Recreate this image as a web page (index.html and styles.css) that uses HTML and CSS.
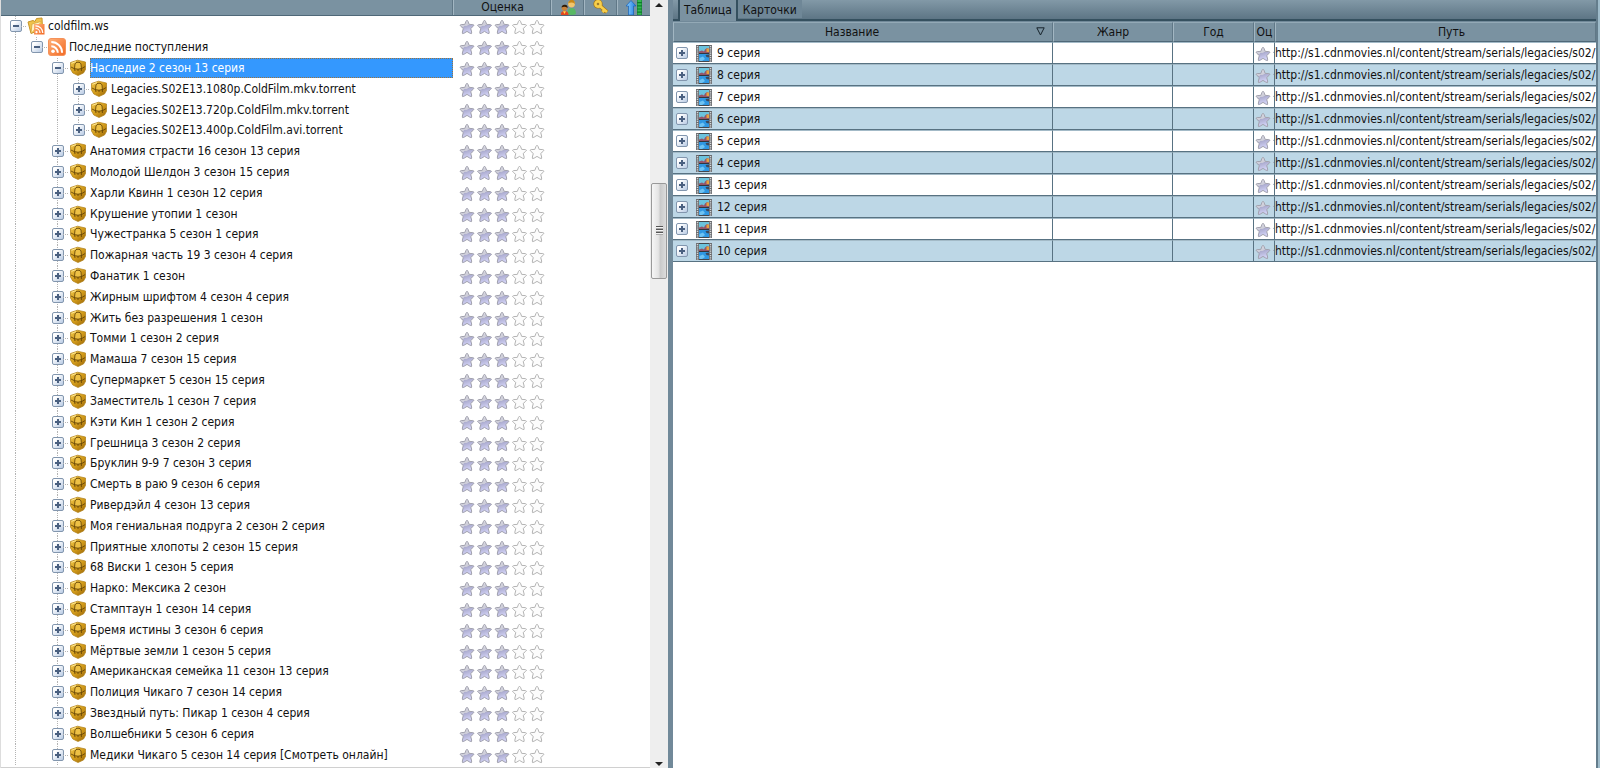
FILE: index.html
```html
<!DOCTYPE html>
<html lang="ru">
<head>
<meta charset="utf-8">
<title>coldfilm.ws</title>
<meta name="viewport" content="width=device-width, initial-scale=1">
<link rel="stylesheet" href="styles.css">
</head>
<body>
<svg class="sprite" aria-hidden="true">
  <defs>
    <linearGradient id="g-star" x1="0" y1="0" x2="0.3" y2="1"><stop offset="0" stop-color="#e2e2e8"/><stop offset="0.5" stop-color="#cbcbd8"/><stop offset="0.52" stop-color="#acaccf"/><stop offset="1" stop-color="#d2d2f6"/></linearGradient>
    <linearGradient id="g-rss" x1="0" y1="0" x2="1" y2="1"><stop offset="0" stop-color="#ffb27a"/><stop offset="1" stop-color="#f26a24"/></linearGradient>
    <linearGradient id="g-gold" x1="0" y1="0" x2="1" y2="1"><stop offset="0" stop-color="#f0c84c"/><stop offset="0.5" stop-color="#d39c1a"/><stop offset="1" stop-color="#996508"/></linearGradient>
    <linearGradient id="g-up" x1="0" y1="0" x2="1" y2="0"><stop offset="0" stop-color="#8fd0ff"/><stop offset="1" stop-color="#1e7fe0"/></linearGradient>
    <symbol id="star" viewBox="0 0 16 16"><path d="M8 1.200Q8.800 1.200 10.200 5.400 15 5.300 15 6.300 14.500 7.200 11.700 9.500 13.200 14 12.500 14.600 11.500 14.800 8 12.400 4.500 14.800 3.500 14.600 2.800 14 4.300 9.500 1.500 7.200 1 6.300 1 5.300 5.800 5.400 7.200 1.200 8 1.200Z" stroke-linejoin="round"/></symbol>
    <symbol id="stars" viewBox="0 0 87 16">
      <g fill="url(#g-star)" stroke="#a2a2ae"><use href="#star" width="16" height="16"/><use href="#star" x="17.500" width="16" height="16"/><use href="#star" x="35" width="16" height="16"/></g>
      <g fill="#fcfcfc" stroke="#b4b4b4"><use href="#star" x="52.500" width="16" height="16"/><use href="#star" x="70" width="16" height="16"/></g>
    </symbol>
    <symbol id="box" viewBox="0 0 18 18">
      <path d="M1.500 3.500 8.500 1.200 16.500 3 16.500 10.500 14.500 14 9 16.500 3.800 14 1.500 10Z" fill="url(#g-gold)" stroke="#ad7c14" stroke-width=".7"/>
      <path d="M6 4.500 9 3.200 12 4.500 12.500 9 9 10.200 5.500 9Z" fill="#eec145"/>
      <path d="M2 8Q5 10.200 9 10.200T16.200 7.500M6 5Q6.500 3.200 9 3.200T12 5L12.400 9.500V12M6 5 5.500 9.500 6 12M9 10.200V12" fill="none" stroke="#5c3d05" stroke-width=".8"/>
      <path d="M2.500 4.300 7 2.600" stroke="#ffe995"/>
    </symbol>
    <symbol id="rss" viewBox="0 0 18 18">
      <rect x=".5" y=".5" width="17" height="17" rx="2.500" fill="url(#g-rss)" stroke="#f5925a"/>
      <circle cx="5" cy="13.300" r="1.800" fill="#fff"/>
      <path d="M3.300 8.300a6.500 6.500 0 0 1 6.500 6.500M3.300 4a10.800 10.800 0 0 1 10.800 10.800" fill="none" stroke="#fff" stroke-width="2"/>
    </symbol>
    <symbol id="feeds" viewBox="0 0 18 18">
      <path d="M1 5 6 3.500 8 4.500 9.500 1.500 15 1 15.500 12 4 16.500Z" fill="#f0c24a" stroke="#c8962a"/>
      <path d="M4 16 5 7 14 4.500" fill="#fff3c4" stroke="#d5a63c" stroke-width=".8"/>
      <rect x="7" y="7" width="10.500" height="10.500" fill="url(#g-rss)"/>
      <circle cx="9.500" cy="15.200" r="1.100" fill="#fff"/>
      <path d="M8.500 11.500a4.500 4.500 0 0 1 4.500 4.500M8.500 8.800a7.300 7.300 0 0 1 7.300 7.300" fill="none" stroke="#fff" stroke-width="1.200"/>
    </symbol>
    <symbol id="film" viewBox="0 0 16 17">
      <path d="M0 0H16V17H0Z" fill="#6b6d70"/>
      <path d="M1.500 1V17M14.500 1V17" stroke="#d5d8da" stroke-width="1.400" stroke-dasharray="1.200 1"/>
      <path d="M3 1H13V8H3Z" fill="#6cc3dd"/><path d="M3 9H13V16H3Z" fill="#2f97e2"/>
      <path d="M3 6.500 6 5.500 8 6.500 9 4.500 11 3 13 4V8H3Z" fill="#94566a"/><path d="M10.500 3.500H13v3.500h-2.500Z" fill="#e8a23c"/>
      <path d="M3 8H13V9H3Z" fill="#33363c"/><path d="M9.500 10 13 9.500V12.500L10.500 12Z" fill="#3d4a5e"/><path d="M3.500 13 7 11.500 9 14 6 16H3.500Z" fill="#6fc3f2"/><path d="M3 16H13V17H3ZM3 0H13V1H3Z" fill="#44474c"/>
    </symbol>
  </defs>
</svg>
<main class="app">
  <section class="left" aria-label="Каталог">
    <div class="tree-pane">
      <div class="tree-head cols">
        <span></span>
        <span class="head-cell">Оценка</span>
        <span class="head-cell"><svg width="17" height="16" viewBox="0 0 17 16" role="img" aria-label="Пользователи">
          <circle cx="11.500" cy="4" r="3.400" fill="#f2c56c"/><path d="M8 3.500Q9-.5 12-.3T15 4Q12 1.500 8 3.500Z" fill="#c78718"/><path d="M7.500 14Q7 8.500 11.500 8T16 14Q12 16 7.500 14Z" fill="#58b864"/>
          <circle cx="4.500" cy="8" r="2.800" fill="#c9823a"/><path d="M1.500 7.500Q2 4.500 5 4.800T7.500 8Q5 6 1.500 7.500Z" fill="#2e1a08"/><path d="M1 15Q.5 11 4.500 11T8.500 15Z" fill="#e2471f"/><path d="M3 11.200 4.500 14 6 11.200Z" fill="#ffd84a"/></svg></span>
        <span class="head-cell"><svg width="17" height="16" viewBox="0 0 17 16" role="img" aria-label="Доступ">
          <g fill="none" stroke="#a87710" stroke-width="4"><circle cx="5" cy="4" r="2.600"/><path d="M7 6 14 12M9.500 12 12 9.500"/></g>
          <g fill="none" stroke="#f7cf4c" stroke-width="2.600"><circle cx="5" cy="4" r="2.600"/><path d="M7 6 14 12M9.500 12 12 9.500"/></g></svg></span>
        <span class="head-cell"><svg width="17" height="16" viewBox="0 0 17 16" role="img" aria-label="Загрузка">
          <path d="M5 .5 10 6H7.500V15H2.500V6H0Z" fill="url(#g-up)" stroke="#1762b8" stroke-width=".7"/>
          <path d="M13.500 0V15" stroke="#0c7a2c" stroke-width="5"/><path d="M13.500 0V15" stroke="#35b851" stroke-width="4" stroke-dasharray="2 1.200"/></svg></span>
      </div>
      <div class="tree" id="tree" role="tree" aria-label="Последние поступления"></div>
    </div>
    <div class="scrollbar">
      <button class="arrow up" aria-label="Прокрутить вверх"></button>
      <span class="space-before"></span>
      <button class="thumb" aria-label="Ползунок"></button>
      <span class="space-after"></span>
      <button class="arrow down" aria-label="Прокрутить вниз"></button>
    </div>
  </section>
  <section class="right" aria-label="Серии">
    <nav class="tabs" role="tablist">
      <button class="tab active" role="tab" aria-selected="true">Таблица</button>
      <button class="tab" role="tab" aria-selected="false">Карточки</button>
    </nav>
    <table class="grid">
      <colgroup><col class="c-name"><col class="c-genre"><col class="c-year"><col class="c-rate"><col class="c-path"></colgroup>
      <thead><tr><th><span class="sorted">Название<svg width="9" height="9" viewBox="0 0 9 9" aria-hidden="true"><path d="M.8.800H8.200L4.500 8Z" fill="none" stroke="#17232b"/></svg></span></th><th>Жанр</th><th>Год</th><th>Оц</th><th class="path-head">Путь</th></tr></thead>
      <tbody id="episodes"></tbody>
    </table>
  </section>
</main>
<script src="app.js"></script>
</body>
</html>
```
FILE: styles.css
```css
* { box-sizing: border-box; }
html, body { height: 100%; }
body {
  margin: 0;
  overflow: hidden;
  background: #fff;
  color: #111;
  font: 12px/16px "DejaVu Sans Condensed", "DejaVu Sans", sans-serif;
  font-stretch: condensed;
}
button { margin: 0; padding: 0; border: 0; font: inherit; color: inherit; }
svg { display: block; flex: none; }
.sprite { position: absolute; width: 0; height: 0; }

.app { display: grid; grid-template-columns: 42fr 58fr; height: 100%; }
.left { display: flex; min-width: 0; min-height: 0; border-left: 1px solid #ddd; border-right: 4px solid #718999; }
.tree-pane { flex: 1; display: flex; flex-direction: column; min-width: 0; overflow: hidden; border-bottom: 1px solid #d0d0d0; }
.cols { display: grid; grid-template-columns: minmax(0, 1fr) 98px 33px 33px 33px; }

.tree-head { flex: none; height: 16px; background: #7a92a1; border-bottom: 1px solid #4f6878; }
.head-cell { display: flex; justify-content: center; overflow: hidden; border-left: 1px solid #a2b6c2; box-shadow: -1px 0 #607887; line-height: 14px; }

.tree { flex: 1; display: grid; grid-auto-rows: minmax(20px, 1fr); padding-bottom: 2px; min-height: 0; }
.row { align-items: center; min-height: 0; }
.node { display: flex; align-items: center; align-self: stretch; padding-left: 4px; min-width: 0; white-space: nowrap; }
.guide { position: relative; flex: none; display: flex; align-items: center; justify-content: center; align-self: stretch; width: 21px; }
.line { background: repeating-linear-gradient(#b4b4b4 0 1px, #fff 1px 2px) 10px 0 / 1px 100% no-repeat; }
.line.end { background-size: 1px 50%; }
.branch::after { content: ""; position: absolute; left: 16px; right: 0; top: 50%; border-top: 1px dotted #b4b4b4; }
.slot { flex: none; width: 22px; padding-left: 1px; }
.toggle {
  width: 12px; height: 12px; flex: none;
  border: 1px solid #8296ae; border-radius: 2px;
  background:
    linear-gradient(#4a6080, #4a6080) center / 6px 2px no-repeat,
    linear-gradient(135deg, #fff 20%, #b9cbe4);
}
.toggle.plus {
  background:
    linear-gradient(#4a6080, #4a6080) center / 6px 2px no-repeat,
    linear-gradient(#4a6080, #4a6080) center / 2px 6px no-repeat,
    linear-gradient(135deg, #fff 20%, #b9cbe4);
}
.label { flex: 1; display: flex; align-items: center; align-self: stretch; min-width: 0; }
.selected .label { background: #3498fe; color: #fff; outline: 1px dotted #9a7340; outline-offset: -1px; }
.rating { justify-self: start; margin: 2px 0 0 6px; }

.scrollbar { flex: none; display: flex; flex-direction: column; width: 18px; background: #eee; }
.arrow { height: 14px; background: none; display: flex; justify-content: center; align-items: center; }
.arrow::before { content: ""; border: 4px solid transparent; }
.up { padding-bottom: 4px; }
.up::before { border-top: 0; border-bottom-color: #222; }
.down { align-items: flex-end; padding-bottom: 2px; }
.down::before { border-bottom: 0; border-top-color: #222; }
.space-before { flex: 169; }
.space-after { flex: 476; }
.thumb {
  flex: 95; margin: 0 1px; border: 1px solid #999; border-radius: 2px;
  background:
    repeating-linear-gradient(#555 0 1px, #f4f4f4 1px 2px, #aaa 2px 3px) center / 7px 9px no-repeat,
    linear-gradient(90deg, #f6f6f6, #e4e4e4 45%, #cacaca 60%, #dcdcdc);
}

.right { display: flex; flex-direction: column; min-width: 0; border-left: 1px solid #718999; border-right: 2px solid #647d8c; margin-right: 2px; box-shadow: 2px 0 #9fbccb; }
.tabs { flex: none; display: flex; height: 21px; padding-left: 5px; background: linear-gradient(#8299a7, #5d7585); border-bottom: 2px solid #35505f; }
.tab { height: 18px; padding: 0 5px; background: #6f8797; line-height: 20px; }
.tab.active { height: 21px; padding: 0 4px 1px; background: #7b92a1; border-left: 2px solid #35505f; border-right: 2px solid #35505f; }
.grid { width: 100%; table-layout: fixed; border-collapse: separate; border-spacing: 0; border-top: 1px solid #718999; }
.c-name { width: 380px; }
.c-genre { width: 120px; }
.c-year { width: 81px; }
.c-rate { width: 21px; }
th, td { padding: 0; overflow: hidden; white-space: nowrap; }
th { height: 20px; font-weight: normal; background: #7a92a1; border-top: 1px solid #93a9b6; border-left: 1px solid #a2b6c2; border-bottom: 1px solid #4f6878; border-right: 1px solid #607887; }
.sorted { display: block; position: relative; padding-right: 22px; }
.sorted svg { position: absolute; right: 7px; top: 3px; }
.path-head { padding-left: 32px; }
td { height: 22px; border-right: 1px solid #587282; border-top: 1px solid #a3bac7; border-bottom: 1px solid #587282; }
tbody tr:nth-child(even) { background: #bdd7e6; }
.title { display: flex; align-items: center; padding-left: 3px; }
.title svg { margin: 0 5px 0 8px; }
td .one { display: block; width: 20px; height: 17px; overflow: hidden; margin-left: 1px; padding-top: 1px; }
td.path { border-right: 0; }
```
FILE: app.js
```js
const nodes = [
  [1, 'feeds', 'coldfilm.ws'],
  [2, 'rss', 'Последние поступления'],
  [3, 'box', 'Наследие 2 сезон 13 серия'],
  [4, 'box', 'Legacies.S02E13.1080p.ColdFilm.mkv.torrent'],
  [4, 'box', 'Legacies.S02E13.720p.ColdFilm.mkv.torrent'],
  [4, 'box', 'Legacies.S02E13.400p.ColdFilm.avi.torrent'],
  ...[
    'Анатомия страсти 16 сезон 13 серия', 'Молодой Шелдон 3 сезон 15 серия', 'Харли Квинн 1 сезон 12 серия',
    'Крушение утопии 1 сезон', 'Чужестранка 5 сезон 1 серия', 'Пожарная часть 19 3 сезон 4 серия',
    'Фанатик 1 сезон', 'Жирным шрифтом 4 сезон 4 серия', 'Жить без разрешения 1 сезон',
    'Томми 1 сезон 2 серия', 'Мамаша 7 сезон 15 серия', 'Супермаркет 5 сезон 15 серия',
    'Заместитель 1 сезон 7 серия', 'Кэти Кин 1 сезон 2 серия', 'Грешница 3 сезон 2 серия',
    'Бруклин 9-9 7 сезон 3 серия', 'Смерть в раю 9 сезон 6 серия', 'Ривердэйл 4 сезон 13 серия',
    'Моя гениальная подруга 2 сезон 2 серия', 'Приятные хлопоты 2 сезон 15 серия', '68 Виски 1 сезон 5 серия',
    'Нарко: Мексика 2 сезон', 'Стамптаун 1 сезон 14 серия', 'Бремя истины 3 сезон 6 серия',
    'Мёртвые земли 1 сезон 5 серия', 'Американская семейка 11 сезон 13 серия', 'Полиция Чикаго 7 сезон 14 серия',
    'Звездный путь: Пикар 1 сезон 4 серия', 'Волшебники 5 сезон 6 серия',
    'Медики Чикаго 5 сезон 14 серия [Смотреть онлайн]',
  ].map(name => [3, 'box', name]),
];

const isLast = i => {
  const depth = nodes[i][0];
  return depth > 1 && depth !== 3 && (!nodes[i + 1] || nodes[i + 1][0] !== depth);
};

document.getElementById('tree').innerHTML = nodes.map(([depth, icon, name], i) => {
  let guides = '';
  for (let level = 1; level < depth; level++) {
    guides += `<span class="guide${level === 2 ? '' : ' line'}"></span>`;
  }
  const open = i < 3;
  return `<div class="row cols${i === 2 ? ' selected' : ''}" role="treeitem" aria-level="${depth}" aria-expanded="${open}">
    <div class="node">${guides}<span class="guide branch line${isLast(i) ? ' end' : ''}"><button class="toggle${open ? '' : ' plus'}" aria-label="${open ? 'Свернуть' : 'Развернуть'}"></button></span>
    <span class="slot"><svg width="18" height="18"><use href="#${icon}"/></svg></span><span class="label">${name}</span></div>
    <svg class="rating" width="87" height="16" role="img" aria-label="Оценка 3 из 5"><use href="#stars"/></svg></div>`;
}).join('');

const episodes = [9, 8, 7, 6, 5, 4, 13, 12, 11, 10];
const path = 'http://s1.cdnmovies.nl/content/stream/serials/legacies/s02/';

document.getElementById('episodes').innerHTML = episodes.map(n => `<tr>
  <td><div class="title"><button class="toggle plus" aria-label="Развернуть"></button><svg width="16" height="17"><use href="#film"/></svg>${n} серия</div></td>
  <td></td><td></td>
  <td><span class="one"><svg width="87" height="16" role="img" aria-label="Оценка"><use href="#stars"/></svg></span></td>
  <td class="path">${path}</td></tr>`).join('');
```
